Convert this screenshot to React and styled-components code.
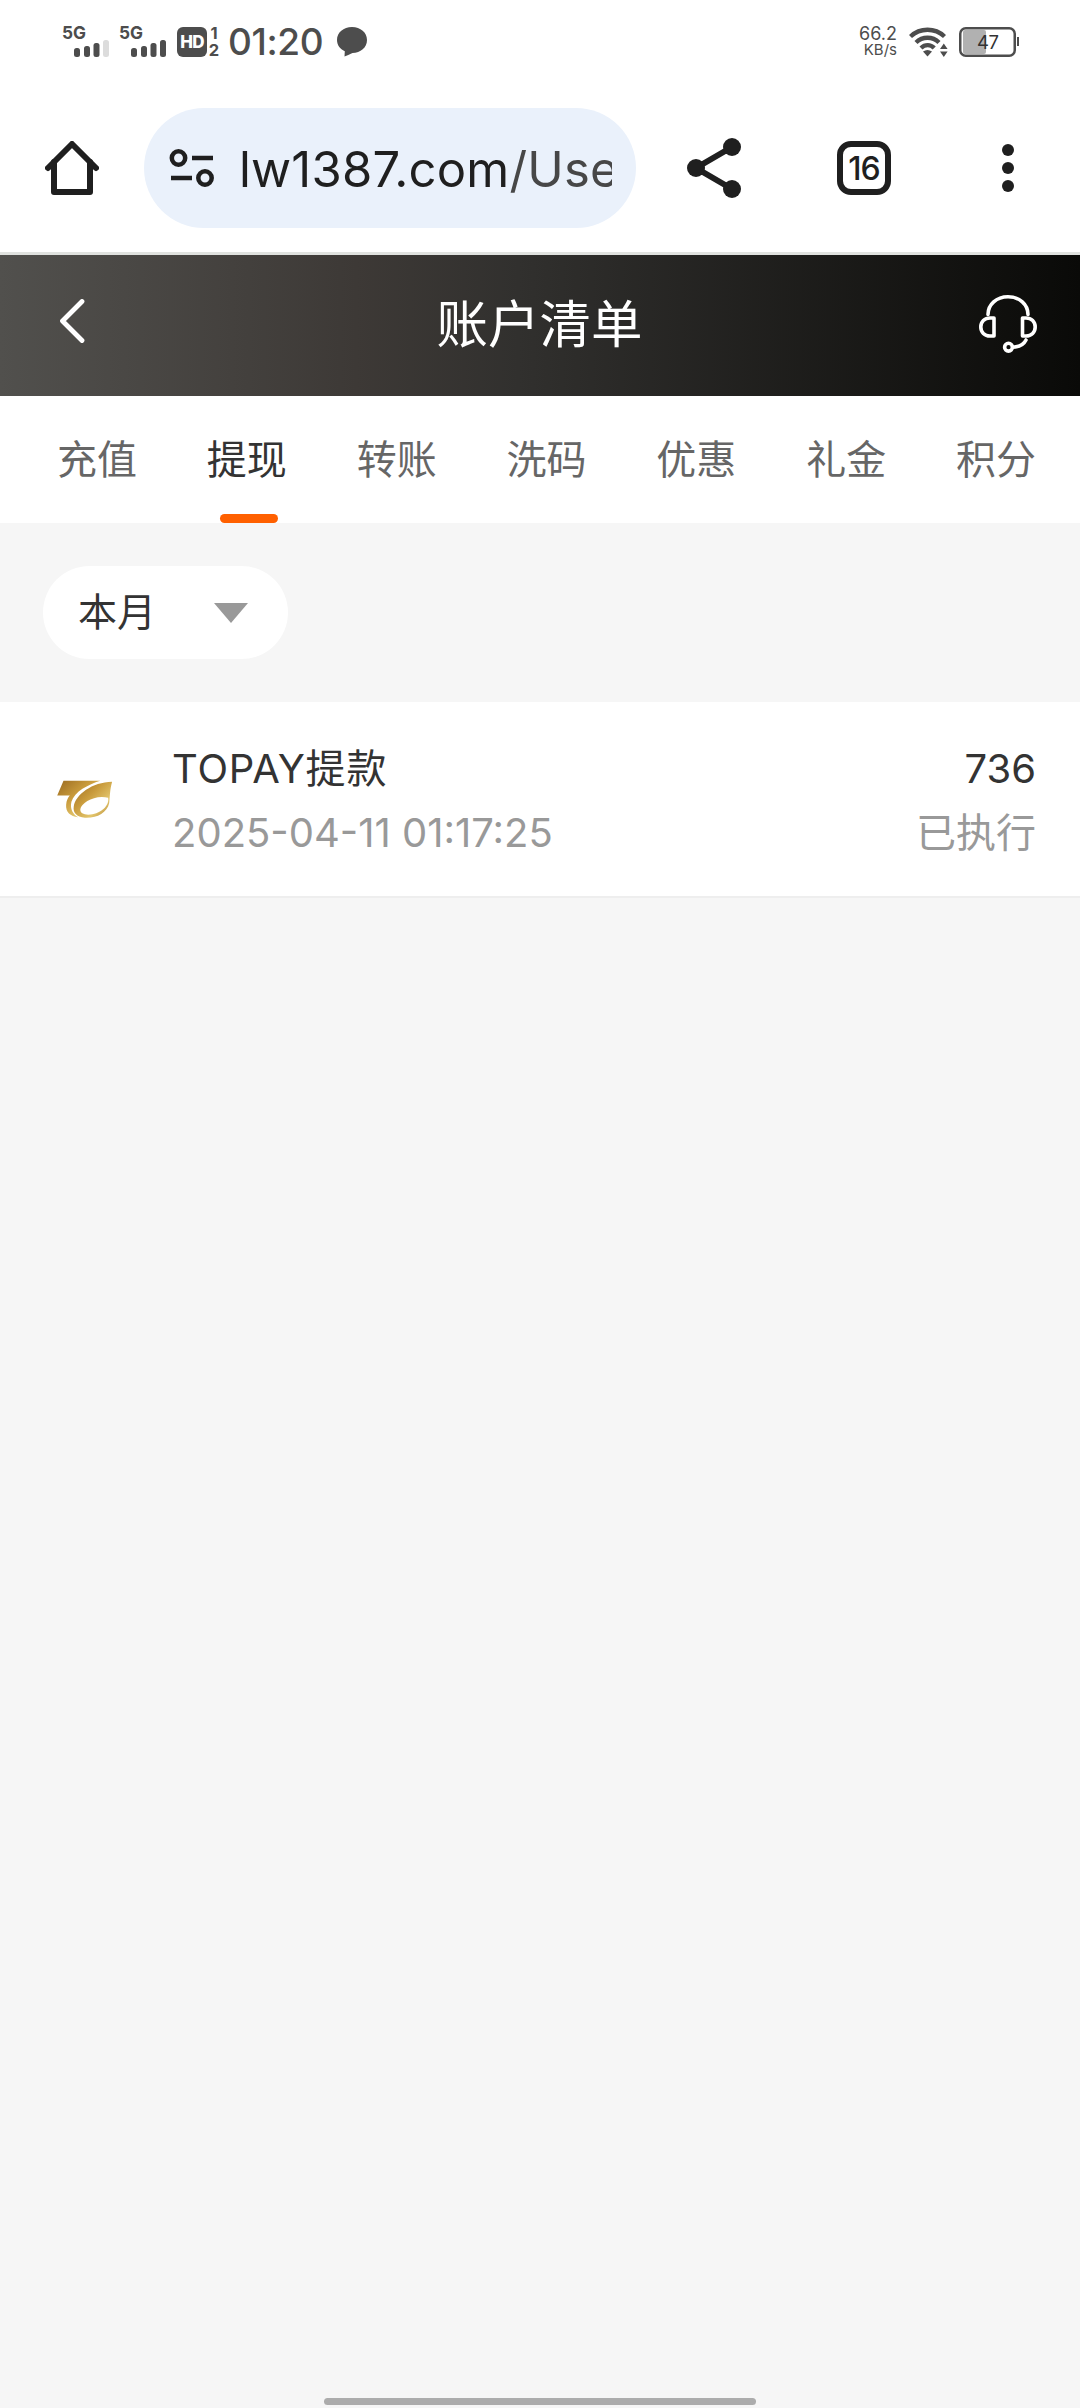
import React from "react";
import styled, { createGlobalStyle } from "styled-components";

const tabs = ["充值", "提现", "转账", "洗码", "优惠", "礼金", "积分"];

const records = [
  {
    name: "TOPAY提款",
    time: "2025-04-11 01:17:25",
    amount: "736",
    status: "已执行",
  },
];

export default function App() {
  const activeTab = "提现";

  return (
    <>
      <GlobalStyle />
      <Screen>
        <StatusBar />
        <BrowserBar />
        <PageHeader>
          <BackIcon />
          <PageTitle>账户清单</PageTitle>
          <HeadsetIcon />
        </PageHeader>
        <TabList>
          {tabs.map((tab) => (
            <Tab key={tab} $active={tab === activeTab}>
              {tab}
            </Tab>
          ))}
        </TabList>
        <FilterArea>
          <FilterButton>
            本月
            <svg width="34" height="20" viewBox="0 0 34 20">
              <path d="M0 0H34L17 20Z" fill="#999" />
            </svg>
          </FilterButton>
        </FilterArea>
        <RecordList>
          {records.map((record) => (
            <Record key={record.time}>
              <TopayLogo />
              <RecordInfo>
                <Name>{record.name}</Name>
                <Time>{record.time}</Time>
              </RecordInfo>
              <RecordResult>
                <Amount>{record.amount}</Amount>
                <Status>{record.status}</Status>
              </RecordResult>
            </Record>
          ))}
        </RecordList>
        <GestureArea>
          <GestureBar />
        </GestureArea>
      </Screen>
    </>
  );
}

function Signal({ weak }) {
  return (
    <svg width="49" height="42" viewBox="0 -4 49 42" fill="#4d4d4d">
      <text x="0" y="14" fontSize="18" fontWeight="700" textLength="24" lengthAdjust="spacingAndGlyphs">
        5G
      </text>
      <rect x="12" y="23" width="6" height="9" rx="2.5" />
      <rect x="22" y="21" width="6" height="11" rx="2.5" />
      <rect x="31.500" y="18" width="6" height="14" rx="2.5" />
      <rect x="41" y="15" width="6" height="17" rx="2.5" fill={weak ? "#dcdcdc" : "#4d4d4d"} />
    </svg>
  );
}

function StatusBar() {
  return (
    <StatusWrapper>
      <StatusGroup>
        <Signal weak />
        <SecondSignal>
          <Signal />
        </SecondSignal>
        <HdBadge>HD</HdBadge>
        <SimNumbers>
          <span>1</span>
          <span>2</span>
        </SimNumbers>
        <Clock>01:20</Clock>
        <svg width="30" height="30" viewBox="0 0 30 30" fill="#4d4d4d">
          <path d="M15 0C23.500 0 30 5.500 30 13S23.500 26 15.500 26C12.500 27.500 10 28.500 7.500 29.500L7.800 24.300C3 22 0 18 0 13C0 5.500 6.500 0 15 0Z" />
        </svg>
      </StatusGroup>
      <StatusGroup>
        <Speed>
          <b>66.2</b>
          <span>KB/s</span>
        </Speed>
        <svg width="40" height="30" viewBox="0 0 40 30" fill="none" stroke="#4d4d4d" strokeWidth="4.400">
          <path d="M1.500 9.500C11 .5 26 .5 35.500 9.500" />
          <path d="M7 15.500C13.500 9.200 23.500 9.200 30 15.500" />
          <path d="M12 21C16 17.200 21.500 17.200 25.200 21" />
          <path d="M14 24.500Q18.500 21.500 23 24.500L18.500 29.500Z" fill="#4d4d4d" stroke="none" />
          <path d="M31 22L34.800 16.500L38.600 22ZM31 24.500H38.600L34.800 30Z" fill="#4d4d4d" stroke="none" />
        </svg>
        <svg width="61" height="30" viewBox="0 0 61 30">
          <rect x="4" y="3" width="23" height="24" rx="2" fill="#b1b1b1" />
          <rect x="1.250" y="1.250" width="54.500" height="27.500" rx="5.500" fill="none" stroke="#4d4d4d" strokeWidth="2.500" />
          <path d="M58 10H60V19H58Z" fill="#4d4d4d" />
          <text x="18" y="22" fontSize="18.500" fill="#333" textLength="22">
            47
          </text>
        </svg>
      </StatusGroup>
    </StatusWrapper>
  );
}

function BrowserBar() {
  return (
    <BrowserWrapper>
      <svg width="54" height="54" viewBox="0 0 54 54" fill="none" stroke="#1f1f1f" strokeWidth="6" strokeLinecap="round" strokeLinejoin="round">
        <path d="M3 27L27 3L51 27" />
        <path d="M9 21V51H45V21" />
      </svg>
      <AddressBar>
        <svg width="46" height="38" viewBox="0 0 46 38" fill="none" stroke="#1f1f1f" strokeWidth="4.500">
          <circle cx="9.500" cy="9" r="6.700" />
          <path d="M23 9H44M2 29H23" />
          <circle cx="36" cy="29" r="6.700" />
        </svg>
        <Url>
          lw1387.com<span>/Use</span>
        </Url>
      </AddressBar>
      <BrowserActions>
        <svg width="54" height="60" viewBox="0 0 54 60" fill="#1f1f1f">
          <path d="M45 9L9 30L45 51" fill="none" stroke="#1f1f1f" strokeWidth="6" />
          <circle cx="45" cy="9" r="9" />
          <circle cx="9" cy="30" r="9" />
          <circle cx="45" cy="51" r="9" />
        </svg>
        <TabCount>16</TabCount>
        <svg width="12" height="48" viewBox="0 0 12 48" fill="#1f1f1f">
          <circle cx="6" cy="6" r="6" />
          <circle cx="6" cy="24" r="6" />
          <circle cx="6" cy="42" r="6" />
        </svg>
      </BrowserActions>
    </BrowserWrapper>
  );
}

function BackIcon() {
  return (
    <svg width="26" height="50" viewBox="0 0 26 50" fill="none" stroke="#fff" strokeWidth="4.800" strokeLinecap="round" strokeLinejoin="round">
      <path d="M23 2.500L3.500 22L23 41.500" />
    </svg>
  );
}

function HeadsetIcon() {
  return (
    <svg width="58" height="58" viewBox="0 0 58 58" fill="none" stroke="#fff" strokeWidth="3.600" strokeLinecap="round" strokeLinejoin="round">
      <path d="M9 19.500C9 9.500 17.500 1.800 29 1.800S49 9.500 49 19.500" />
      <path d="M15 23H11C5.500 23 1.800 26.800 1.800 32S5.500 41 11 41H15Z" />
      <path d="M43.500 23H47C52.500 23 56.200 26.800 56.200 32S52.500 41 47 41H43.500Z" />
      <path d="M47 45C44.500 50 40 52 34 52.200" />
      <circle cx="29.500" cy="52.200" r="3.900" />
    </svg>
  );
}

function TopayLogo() {
  return (
    <svg width="60" height="43" viewBox="45 40 180 130">
      <defs>
        <linearGradient id="gold" x1="0" y1="0" x2="1" y2="1">
          <stop offset="0" stopColor="#9a6a20" />
          <stop offset=".4" stopColor="#c99b3c" />
          <stop offset=".7" stopColor="#e3c66d" />
          <stop offset="1" stopColor="#ad7b2a" />
        </linearGradient>
      </defs>
      <path d="M70 48H181C145 60 103 80 94 112C89 133 98 149 114 159C91 156 76 143 78 121C79 108 83 100 89 93H51Z" fill="url(#gold)" />
      <path fillRule="evenodd" d="M217 51C210 75 211 94 208 116C202 145 169 162 135 160C109 158 98 144 101 126C106 90 157 52 217 51ZM205 100C165 90 124 115 121 134C118 153 151 156 177 143C196 134 208 117 205 100Z" fill="url(#gold)" />
    </svg>
  );
}

const GlobalStyle = createGlobalStyle`
  * {
    box-sizing: border-box;
  }

  body {
    margin: 0;
    background-color: #f6f6f6;
    font-family: Inter, "Noto Sans CJK SC", sans-serif;
  }

  svg {
    display: block;
    flex-shrink: 0;
  }
`;

const Screen = styled.div`
  display: flex;
  flex-direction: column;
  width: 1080px;
  height: 2408px;
  overflow: hidden;
`;

const StatusWrapper = styled.div`
  display: flex;
  justify-content: space-between;
  align-items: center;
  height: 84px;
  padding: 0 60px 0 62px;
  background-color: #fff;
  color: #4d4d4d;
`;

const StatusGroup = styled.div`
  display: flex;
  align-items: center;
`;

const SecondSignal = styled.div`
  margin: 0 9px 0 8px;
`;

const HdBadge = styled.div`
  width: 30px;
  height: 30px;
  border-radius: 6px;
  background-color: #4d4d4d;
  color: #fff;
  font-size: 17px;
  font-weight: 800;
  line-height: 30px;
  text-align: center;
  letter-spacing: -0.8px;
`;

const SimNumbers = styled.div`
  display: flex;
  flex-direction: column;
  align-items: center;
  width: 14px;
  margin-right: 7px;
  font-size: 16.5px;
  font-weight: 700;
  line-height: 17px;
`;

const Clock = styled.div`
  width: 109px;
  font-size: 37px;
  font-weight: 500;
  line-height: 44px;
  letter-spacing: -0.4px;
`;

const Speed = styled.div`
  display: flex;
  flex-direction: column;
  align-items: flex-end;
  width: 40px;
  margin-right: 12px;
  font-size: 15px;
  line-height: 16px;

  b {
    font-size: 18px;
    font-weight: 400;
  }

  & + svg {
    margin-right: 10px;
  }
`;

const BrowserWrapper = styled.div`
  display: flex;
  align-items: center;
  height: 171px;
  padding: 0 66px 0 45px;
  border-bottom: 3px solid #e0e2df;
  background-color: #fff;
`;

const AddressBar = styled.div`
  display: flex;
  align-items: center;
  width: 492px;
  height: 120px;
  margin-left: 45px;
  padding: 0 24px 0 25px;
  border-radius: 60px;
  background-color: #eaf1fb;
`;

const Url = styled.div`
  flex: 1;
  min-width: 0;
  margin-left: 24px;
  padding-top: 4px;
  overflow: hidden;
  color: #1f1f1f;
  font-size: 49px;
  line-height: 64px;
  letter-spacing: 0.2px;
  white-space: nowrap;

  span {
    color: #474747;
  }
`;

const BrowserActions = styled.div`
  display: flex;
  flex: 1;
  align-items: center;
  justify-content: space-between;
  margin-left: 51px;
`;

const TabCount = styled.div`
  width: 54px;
  height: 54px;
  margin-left: -15px;
  border: 6px solid #1f1f1f;
  border-radius: 14px;
  color: #1f1f1f;
  font-size: 32px;
  font-weight: 500;
  line-height: 43px;
  text-align: center;
  letter-spacing: -1px;
`;

const PageHeader = styled.header`
  display: flex;
  align-items: center;
  justify-content: space-between;
  height: 141px;
  padding: 0 43px 4px 59px;
  background: linear-gradient(to right, #51504d, #3d3936 33%, #31302e 48%, #0a0a08);
`;

const PageTitle = styled.h1`
  margin: 0 0 0 15px;
  color: #fff;
  font-size: 51.5px;
  font-weight: 400;
  line-height: 70px;
`;

const TabList = styled.nav`
  display: flex;
  justify-content: space-between;
  height: 127px;
  padding: 0 44px 0 57px;
  background-color: #fff;
`;

const Tab = styled.div`
  position: relative;
  color: ${(props) => (props.$active ? "#333" : "#666")};
  font-size: 40px;
  line-height: 128px;

  &::after {
    content: "";
    display: ${(props) => (props.$active ? "block" : "none")};
    position: absolute;
    bottom: 0;
    left: 13px;
    width: 58px;
    height: 9px;
    border-radius: 5px;
    background-color: #ff6000;
  }
`;

const FilterArea = styled.div`
  padding: 43px;
`;

const FilterButton = styled.div`
  display: flex;
  align-items: center;
  justify-content: space-between;
  width: 245px;
  height: 93px;
  padding: 0 40px 2px 35px;
  border-radius: 47px;
  background-color: #fff;
  color: #333;
  font-size: 39px;
  line-height: 60px;

  svg {
    margin-top: 2px;
  }
`;

const RecordList = styled.div`
  flex: 1;
`;

const Record = styled.div`
  display: flex;
  align-items: center;
  height: 196px;
  padding: 0 44px 0 55px;
  border-bottom: 2px solid #eee;
  background-color: #fff;
`;

const RecordInfo = styled.div`
  flex: 1;
  margin-left: 57px;
  padding-top: 4px;
  font-size: 40px;
  line-height: 64px;
`;

const RecordResult = styled.div`
  padding-top: 4px;
  font-size: 40px;
  line-height: 64px;
  text-align: right;
`;

const Name = styled.div`
  color: #333;
  letter-spacing: 0.8px;
`;

const Time = styled.div`
  color: #999;
`;

const Amount = styled.div`
  color: #333;
`;

const Status = styled.div`
  color: #999;
`;

const GestureArea = styled.div`
  display: flex;
  justify-content: center;
  padding-bottom: 3px;
`;

const GestureBar = styled.div`
  width: 432px;
  height: 7px;
  border-radius: 4px;
  background-color: #acacac;
`;
